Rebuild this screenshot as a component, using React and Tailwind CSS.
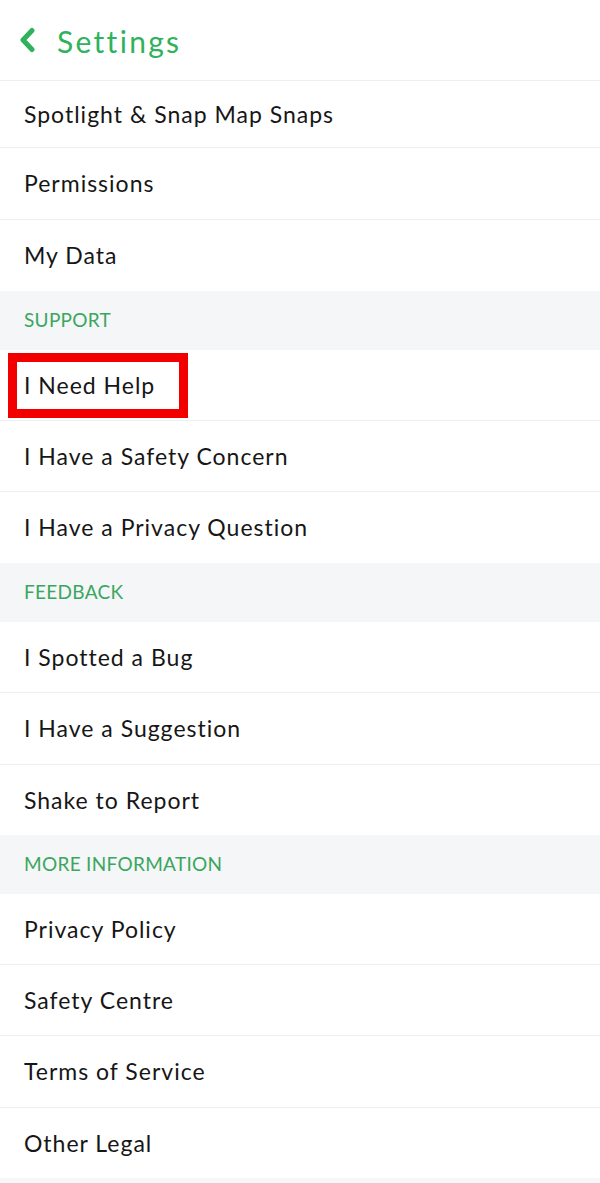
const sections = [
  {
    title: null,
    rows: [
      { label: "Spotlight & Snap Map Snaps", h: "h-[67px]" },
      { label: "Permissions", h: "h-[72px]" },
      { label: "My Data", h: "h-[71px]" },
    ],
  },
  {
    title: "SUPPORT",
    rows: [
      { label: "I Need Help", h: "h-[71px]", highlight: true },
      { label: "I Have a Safety Concern", h: "h-[71px]" },
      { label: "I Have a Privacy Question", h: "h-[71px]" },
    ],
  },
  {
    title: "FEEDBACK",
    rows: [
      { label: "I Spotted a Bug", h: "h-[71px]" },
      { label: "I Have a Suggestion", h: "h-[72px]" },
      { label: "Shake to Report", h: "h-[70px]" },
    ],
  },
  {
    title: "MORE INFORMATION",
    rows: [
      { label: "Privacy Policy", h: "h-[71px]" },
      { label: "Safety Centre", h: "h-[71px]" },
      { label: "Terms of Service", h: "h-[72px]" },
      { label: "Other Legal", h: "h-[70px]" },
    ],
  },
];

const SettingsRow = ({ label, h, last, highlight }) => (
  <div
    className={`relative flex items-center px-6 ${h} ${last ? "" : "border-b border-[#efefef]"}`}
  >
    <span className="text-[23px] text-[#161616] tracking-[1px]">{label}</span>
    {highlight && (
      <div className="absolute left-2 top-[3px] w-[180px] h-[65px] border-[9px] border-[#f20000] pointer-events-none" />
    )}
  </div>
);

export default function App() {
  return (
    <div
      className="w-[600px] h-[1183px] overflow-hidden bg-white"
      style={{ fontFamily: "Lato, 'Noto Sans', sans-serif" }}
    >
      <div className="h-[81px] flex items-center border-b border-[#efefef]">
        <svg className="ml-[18px] w-[20px] h-[26px] -mt-[1px]" viewBox="0 0 20 26" fill="none">
          <polyline
            points="14,3.5 5,13 14,22.5"
            stroke="#2fb25b"
            strokeWidth="5"
            strokeLinecap="round"
            strokeLinejoin="round"
          />
        </svg>
        <span className="ml-[19px] text-[30px] text-[#2fb25b] tracking-[2.3px] mt-[2px]">Settings</span>
      </div>

      {sections.map((section, i) => (
        <div key={i}>
          {section.title && (
            <div className="h-[59px] flex items-center px-6 bg-[#f5f6f8]">
              <span className="text-[19px] text-[#3aa65f] tracking-[0.3px]">{section.title}</span>
            </div>
          )}
          {section.rows.map((row, j) => (
            <SettingsRow key={row.label} {...row} last={j === section.rows.length - 1} />
          ))}
        </div>
      ))}

      <div className="h-[6px] bg-[#f5f6f8]" />
    </div>
  );
}
